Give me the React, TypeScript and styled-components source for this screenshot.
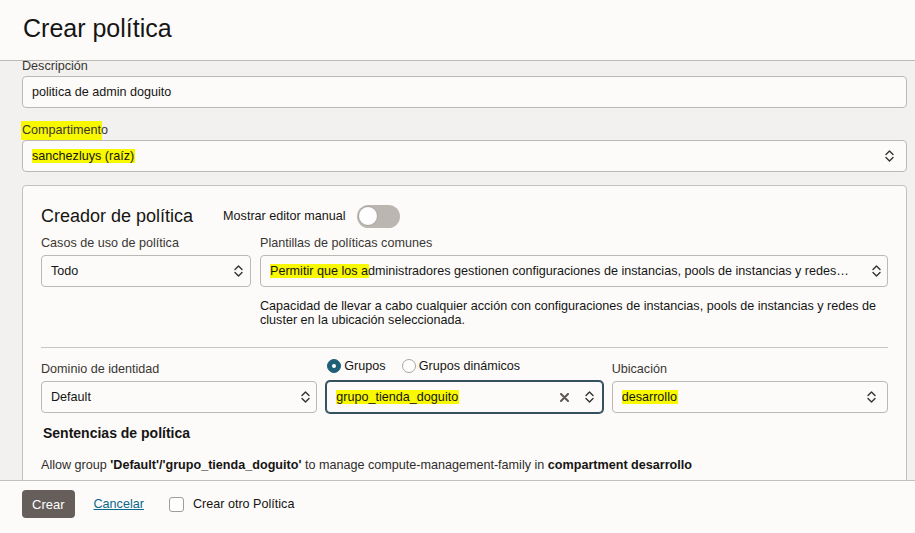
import React from "react";
import styled, { createGlobalStyle } from "styled-components";

const GlobalStyle = createGlobalStyle`
  html, body { margin: 0; padding: 0; }
  body {
    font-family: "Liberation Sans", Arial, sans-serif;
    font-size: 12.5px;
    color: #161513;
    background: #fcfbfa;
  }
  * { box-sizing: border-box; }
`;

const Page = styled.div`
  width: 915px;
  height: 533px;
  display: flex;
  flex-direction: column;
  overflow: hidden;
`;

const Header = styled.header`
  flex: none;
  height: 61px;
  padding: 13px 23px 0;
  background: #fcfbfa;
  border-bottom: 1px solid #bdb9b4;
`;

const Title = styled.h1`
  margin: 0;
  font-size: 25px;
  font-weight: 400;
  line-height: 30px;
  color: #161513;
`;

const Body = styled.main`
  flex: 1;
  min-height: 0;
  overflow: hidden;
  background: #f2f1ef;
`;

const Scrolled = styled.div`
  margin-top: -3px;
  padding: 0 8px 0 22px;
  display: flex;
  flex-direction: column;
`;

const Field = styled.div<{ $gap?: number; $mb?: number }>`
  min-width: 0;
  display: flex;
  flex-direction: column;
  gap: ${(p) => p.$gap ?? 2}px;
  margin-bottom: ${(p) => p.$mb ?? 0}px;
`;

const Label = styled.label`
  display: block;
  font-size: 12.6px;
  line-height: 16px;
  color: #3a3632;
  white-space: nowrap;
`;

const Box = styled.div<{ $pr?: number; $gap?: number; $focused?: boolean }>`
  height: 32px;
  min-width: 0;
  display: flex;
  align-items: center;
  gap: ${(p) => p.$gap ?? 8}px;
  padding: 0 ${(p) => p.$pr ?? 8}px 0 9px;
  background: #fcfbfa;
  border: 1px solid ${(p) => (p.$focused ? "#35515f" : "#bcb8b3")};
  box-shadow: ${(p) => (p.$focused ? "0 0 0 1px #35515f" : "none")};
  border-radius: 4px;
`;

const Value = styled.span`
  flex: 1;
  min-width: 0;
  overflow: hidden;
  white-space: nowrap;
  text-overflow: ellipsis;
  font-size: 12.6px;
  color: #161513;
`;

const Mark = styled.span`
  background: #f8f800;
  padding: 2px 1px 3px;
  margin: 0 -1px;
`;

const Panel = styled.section`
  margin-top: 13px;
  padding: 18px 18px 30px;
  background: #fcfbfa;
  border: 1px solid #c4c0bb;
  border-radius: 4px;
`;

const PanelHead = styled.div`
  height: 24px;
  display: flex;
  align-items: center;
`;

const PanelTitle = styled.h2`
  margin: 0;
  font-size: 18px;
  font-weight: 400;
  line-height: 24px;
  color: #161513;
`;

const SwitchText = styled.span`
  margin-left: 30px;
  font-size: 12.6px;
  color: #161513;
`;

const Track = styled.span`
  margin-left: 11px;
  width: 43px;
  height: 23px;
  border-radius: 12px;
  background: #bcb6b0;
  display: flex;
  align-items: center;
  padding-left: 1px;
`;

const Knob = styled.span`
  width: 20px;
  height: 20px;
  border-radius: 50%;
  background: #fff;
  border: 1px solid #a8a29c;
`;

const TwoCols = styled.div`
  margin-top: 7px;
  display: grid;
  grid-template-columns: 210px minmax(0, 1fr);
  column-gap: 9px;
`;

const Help = styled.p`
  grid-column: 2;
  margin: 12px 0 0;
  font-size: 12.6px;
  line-height: 14px;
  color: #161513;
`;

const Divider = styled.hr`
  margin: 20px 0 0;
  border: none;
  height: 1px;
  background: #c9c5c0;
`;

const ThreeCols = styled.div`
  margin-top: 10px;
  display: grid;
  grid-template-columns: repeat(3, minmax(0, 1fr));
  column-gap: 9px;
  align-items: end;
`;

const RadioRow = styled.div`
  height: 16px;
  display: flex;
  align-items: center;
  padding-left: 1px;
  font-size: 12.6px;
`;

const RadioItem = styled.span<{ $mr?: number }>`
  display: inline-flex;
  align-items: center;
  gap: 3px;
  margin-right: ${(p) => p.$mr ?? 0}px;
  color: #161513;
`;

const RadioDot = styled.span<{ $on?: boolean }>`
  width: 14px;
  height: 14px;
  border-radius: 50%;
  display: inline-flex;
  align-items: center;
  justify-content: center;
  background: ${(p) => (p.$on ? "#1f5f77" : "#fff")};
  border: 1px solid ${(p) => (p.$on ? "#1f5f77" : "#aaa59f")};
  &::after {
    content: "";
    width: 4px;
    height: 4px;
    border-radius: 50%;
    background: ${(p) => (p.$on ? "#fff" : "transparent")};
  }
`;

const SectionTitle = styled.h3`
  margin: 11px 0 0 2px;
  font-size: 14px;
  font-weight: 700;
  line-height: 18px;
  color: #161513;
`;

const Statement = styled.p`
  margin: 15px 0 0;
  font-size: 12.6px;
  line-height: 16px;
  color: #312d2a;
  white-space: nowrap;
  b { color: #161513; }
`;

const Footer = styled.footer`
  flex: none;
  height: 53px;
  padding: 9px 22px 0;
  background: #fcfbfa;
  border-top: 1px solid #c3bfba;
`;

const FooterRow = styled.div`
  height: 28px;
  display: flex;
  align-items: center;
  font-size: 12.6px;
`;

const PrimaryButton = styled.button`
  height: 28px;
  padding: 0 10px;
  border: none;
  border-radius: 4px;
  background: #655e5a;
  color: #fff;
  font-family: inherit;
  font-size: 13px;
`;

const CancelLink = styled.a`
  margin-left: 19px;
  color: #0b678a;
  text-decoration: underline;
`;

const CheckBox = styled.span`
  margin-left: 25px;
  width: 15px;
  height: 15px;
  border-radius: 3px;
  border: 1px solid #a19c96;
  background: #fff;
`;

const CheckText = styled.span`
  margin-left: 9px;
  color: #161513;
`;

const Chevrons = () => (
  <svg width="9" height="14" viewBox="0 0 9 14" fill="none" style={{ flex: "none" }}>
    <path d="M1 5.5 L4.5 2 L8 5.5 M1 8.5 L4.5 12 L8 8.5" stroke="#35312d" strokeWidth="1.4" strokeLinecap="round" strokeLinejoin="round" />
  </svg>
);

const ClearX = () => (
  <svg width="9" height="9" viewBox="0 0 9 9" fill="none" style={{ flex: "none", marginRight: 8 }}>
    <path d="M1 1 L8 8 M8 1 L1 8" stroke="#5d5752" strokeWidth="2" strokeLinecap="round" />
  </svg>
);

export default function App() {
  return (
    <Page>
      <GlobalStyle />
      <Header>
        <Title>Crear política</Title>
      </Header>
      <Body>
        <Scrolled>
          <Field $mb={14}>
            <Label>Descripción</Label>
            <Box>
              <Value>politica de admin doguito</Value>
            </Box>
          </Field>
          <Field>
            <Label>
              <Mark>Compartiment</Mark>o
            </Label>
            <Box $pr={12}>
              <Value>
                <Mark>sanchezluys (raíz)</Mark>
              </Value>
              <Chevrons />
            </Box>
          </Field>

          <Panel>
            <PanelHead>
              <PanelTitle>Creador de política</PanelTitle>
              <SwitchText>Mostrar editor manual</SwitchText>
              <Track>
                <Knob />
              </Track>
            </PanelHead>

            <TwoCols>
              <Field $gap={4}>
                <Label>Casos de uso de política</Label>
                <Box $pr={7}>
                  <Value>Todo</Value>
                  <Chevrons />
                </Box>
              </Field>
              <Field $gap={4}>
                <Label>Plantillas de políticas comunes</Label>
                <Box $pr={6} $gap={20}>
                  <Value>
                    <Mark>Permitir que los a</Mark>dministradores gestionen configuraciones de instancias, pools de instancias y redes de cluster en la ubicación seleccionada
                  </Value>
                  <Chevrons />
                </Box>
              </Field>
              <Help>
                Capacidad de llevar a cabo cualquier acción con configuraciones de instancias, pools de instancias y redes de cluster en la ubicación seleccionada.
              </Help>
            </TwoCols>

            <Divider />

            <ThreeCols>
              <Field $gap={4}>
                <Label>Dominio de identidad</Label>
                <Box $pr={6}>
                  <Value>Default</Value>
                  <Chevrons />
                </Box>
              </Field>
              <Field $gap={7}>
                <RadioRow>
                  <RadioItem $mr={16}>
                    <RadioDot $on />
                    Grupos
                  </RadioItem>
                  <RadioItem>
                    <RadioDot />
                    Grupos dinámicos
                  </RadioItem>
                </RadioRow>
                <Box $focused $pr={8}>
                  <Value>
                    <Mark>grupo_tienda_doguito</Mark>
                  </Value>
                  <ClearX />
                  <Chevrons />
                </Box>
              </Field>
              <Field $gap={4}>
                <Label>Ubicación</Label>
                <Box $pr={11}>
                  <Value>
                    <Mark>desarrollo</Mark>
                  </Value>
                  <Chevrons />
                </Box>
              </Field>
            </ThreeCols>

            <SectionTitle>Sentencias de política</SectionTitle>
            <Statement>
              Allow group <b>'Default'/'grupo_tienda_doguito'</b> to manage compute-management-family in{" "}
              <b>compartment desarrollo</b>
            </Statement>
          </Panel>
        </Scrolled>
      </Body>
      <Footer>
        <FooterRow>
          <PrimaryButton>Crear</PrimaryButton>
          <CancelLink href="#">Cancelar</CancelLink>
          <CheckBox />
          <CheckText>Crear otro Política</CheckText>
        </FooterRow>
      </Footer>
    </Page>
  );
}
